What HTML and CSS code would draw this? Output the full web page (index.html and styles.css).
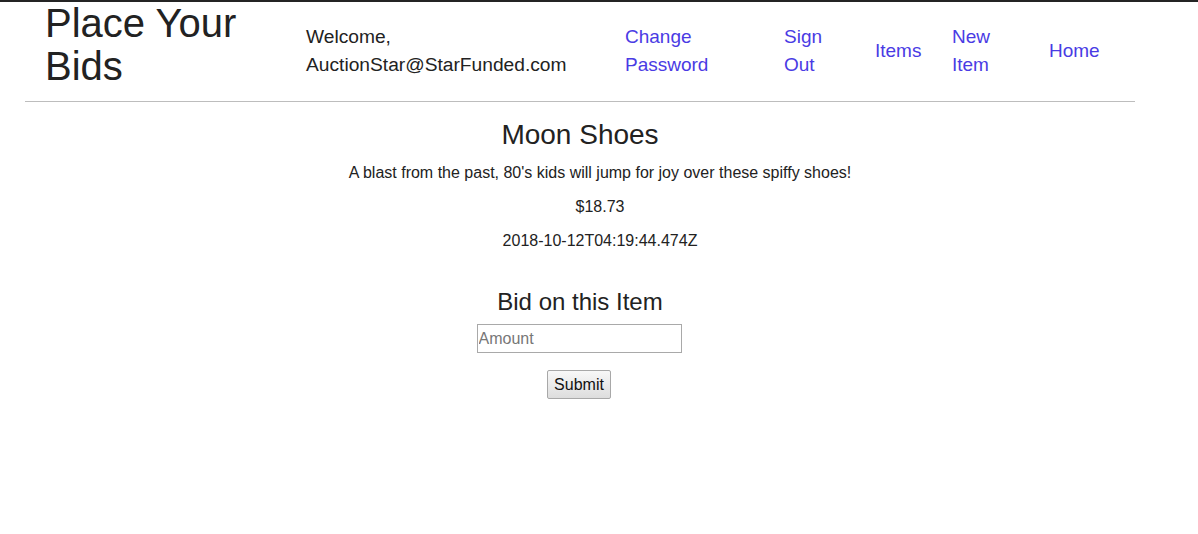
FILE: index.html
```html
<!DOCTYPE html>
<html>
<head>
<meta charset="utf-8">
<title>Place Your Bids</title>
<link rel="stylesheet" href="styles.css">
</head>
<body>
<header class="header">
  <h1 class="brand">Place Your Bids</h1>
  <div class="welcome">Welcome, AuctionStar@StarFunded.com</div>
  <nav class="nav">
    <a class="nav-link nav-change" href="#">Change Password</a>
    <a class="nav-link nav-sign" href="#">Sign Out</a>
    <a class="nav-link nav-items" href="#">Items</a>
    <a class="nav-link nav-new" href="#">New Item</a>
    <a class="nav-link nav-home" href="#">Home</a>
  </nav>
</header>
<main class="main">
  <h3 class="item-title">Moon Shoes</h3>
  <div class="item-details">
    <p class="item-text">A blast from the past, 80's kids will jump for joy over these spiffy shoes!</p>
    <p class="item-text">$18.73</p>
    <p class="item-text">2018-10-12T04:19:44.474Z</p>
  </div>
  <form class="bid-form">
    <h4 class="bid-title">Bid on this Item</h4>
    <input class="bid-input" type="text" placeholder="Amount">
    <button class="bid-button" type="button">Submit</button>
  </form>
</main>
</body>
</html>
```
FILE: styles.css
```css
html, body {
  margin: 0;
  padding: 0;
  background: #fff;
}
body {
  border-top: 2px solid #242424;
  font-family: "Liberation Sans", Arial, sans-serif;
  color: #212529;
}
.header {
  margin-left: 25px;
  width: 1110px;
  height: 99px;
  display: flex;
  align-items: center;
  border-bottom: 1px solid #bdbdbd;
}
.brand {
  align-self: flex-start;
  margin: 0;
  padding-left: 20px;
  width: 261px;
  flex: none;
  font-size: 40px;
  line-height: 43px;
  font-weight: normal;
  color: #222;
}
.welcome {
  width: 319px;
  flex: none;
  padding-right: 30px;
  padding-bottom: 2px;
  box-sizing: border-box;
  font-size: 19.2px;
  line-height: 28px;
  color: #222;
}
.nav {
  display: flex;
  align-items: center;
  padding-bottom: 2px;
}
.nav-link {
  display: block;
  flex: none;
  box-sizing: border-box;
  font-size: 19px;
  line-height: 28px;
  color: #4a3be4;
  text-decoration: none;
}
.nav-change { width: 159px; padding-right: 40px; }
.nav-sign { width: 91px; padding-right: 40px; }
.nav-items { width: 77px; }
.nav-new { width: 97px; padding-right: 40px; }
.nav-home { width: 80px; }
.main {
  margin-left: 25px;
  width: 1110px;
  text-align: center;
  padding-top: 16px;
}
.item-title {
  margin: 0 0 9px;
  font-size: 28px;
  line-height: 33.6px;
  font-weight: normal;
  color: #222;
}
.item-details {
  padding-left: 40px;
}
.item-text {
  margin: 0 0 10px;
  font-size: 16px;
  line-height: 24px;
  color: #222;
}
.bid-form {
  margin: 35px 0 0;
  display: flex;
  flex-direction: column;
  align-items: center;
}
.bid-title {
  margin: 0 0 9px;
  font-size: 24px;
  line-height: 27.6px;
  font-weight: normal;
  color: #222;
}
.bid-input {
  width: 205px;
  height: 29px;
  box-sizing: border-box;
  border: 1px solid #a9a9a9;
  padding: 1px 1px;
  font-family: "Liberation Sans", Arial, sans-serif;
  font-size: 16px;
  color: #222;
  margin: 0 2px 17px 0;
}
.bid-input::placeholder {
  color: #777;
}
.bid-button {
  height: 29px;
  box-sizing: border-box;
  padding: 0 6px;
  margin: 0 2px 0 0;
  border: 1px solid #a8a8a8;
  border-radius: 2px;
  background: linear-gradient(#f8f8f8, #dddddd);
  font-family: "Liberation Sans", Arial, sans-serif;
  font-size: 16px;
  color: #111;
}
```
